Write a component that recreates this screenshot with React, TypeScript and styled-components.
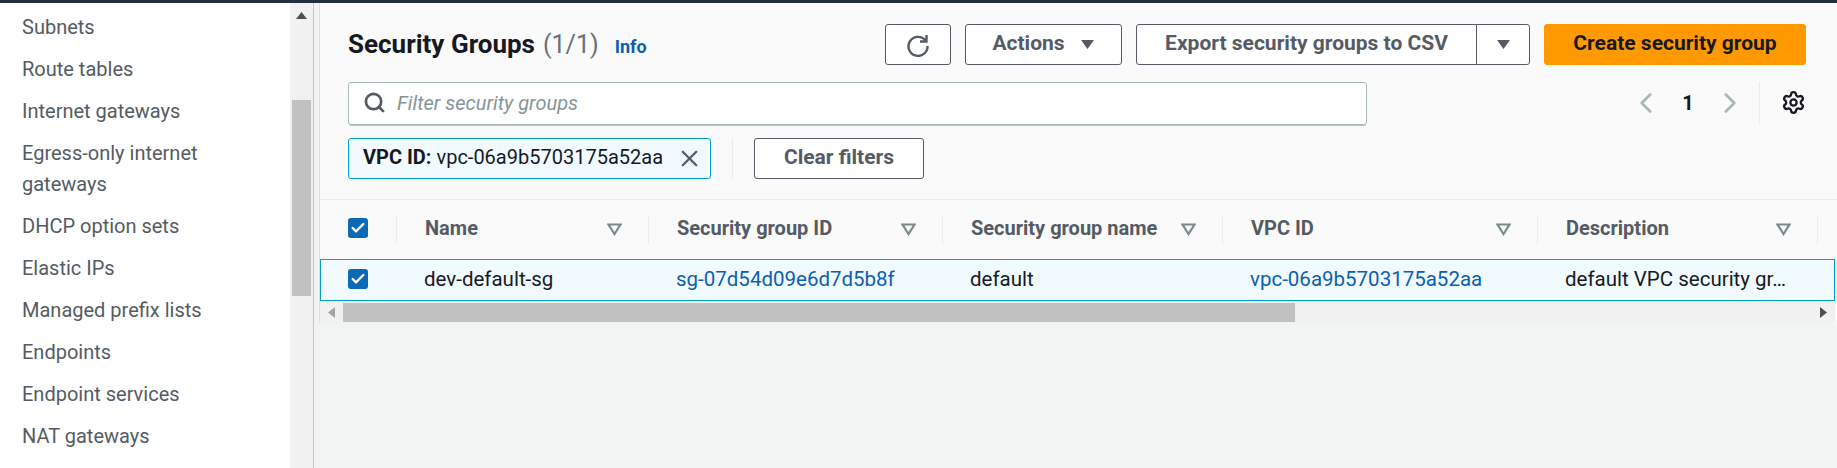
import styled, { createGlobalStyle } from "styled-components";
import { Check, ChevronLeft, ChevronRight, Search, Settings, X } from "lucide-react";

const GlobalStyle = createGlobalStyle`
  html, body {
    margin: 0;
    padding: 0;
    height: 100%;
    overflow: hidden;
    background: #f2f3f3;
    font-family: Roboto, "Liberation Sans", sans-serif;
  }
  * { box-sizing: border-box; }
`;

const Page = styled.div`
  width: 1837px;
  height: 468px;
  display: flex;
  flex-direction: column;
  overflow: hidden;
`;

const TopBar = styled.div`
  height: 3px;
  flex: none;
  background: #232f3e;
`;

const Main = styled.div`
  flex: 1;
  display: flex;
  min-height: 0;
`;

const Sidebar = styled.nav`
  width: 290px;
  flex: none;
  background: #fff;
  padding: 9px 0 0 22px;
  overflow: hidden;
`;

const NavItem = styled.div`
  width: 200px;
  margin-bottom: 11px;
  font-size: 20px;
  line-height: 31px;
  color: #545b64;
`;

const NavScroll = styled.div`
  width: 24px;
  flex: none;
  background: #f1f1f1;
  display: flex;
  flex-direction: column;
  align-items: center;
  border-right: 1px solid #c4c8c8;
`;

const ArrowBox = styled.div`
  height: 25px;
  flex: none;
  display: flex;
  align-items: center;
  justify-content: center;
`;

const NavThumb = styled.div`
  width: 19px;
  height: 196px;
  margin-top: 72px;
  background: #c1c1c1;
`;

const Gutter = styled.div`
  width: 5px;
  flex: none;
`;

const Content = styled.main`
  width: 1518px;
  flex: none;
`;

const Panel = styled.section`
  background: #fafafa;
  border-left: 1px solid #dfe2e2;
`;

const Header = styled.div`
  padding: 21px 31px 20px 28px;
  border-bottom: 1px solid #eaeded;
  display: flex;
  flex-direction: column;
`;

const TitleRow = styled.div`
  display: flex;
  align-items: center;
  gap: 14px;
  height: 41px;
`;

const TitleBlock = styled.div`
  flex: 1;
  display: flex;
  align-items: baseline;
  color: #16191f;
`;

const Title = styled.h1`
  margin: 0;
  font-size: 26px;
  font-weight: 700;
  line-height: 41px;
`;

const Count = styled.span`
  margin-left: 8px;
  font-size: 25px;
  color: #687078;
`;

const InfoLink = styled.a`
  margin-left: 16px;
  font-size: 18px;
  font-weight: 700;
  color: #0b5fad;
`;

const Button = styled.button<{ $w?: number }>`
  height: 41px;
  width: ${(p) => (p.$w ? `${p.$w}px` : "auto")};
  padding: 0;
  display: inline-flex;
  align-items: center;
  justify-content: center;
  gap: 15px;
  background: #fff;
  border: 1px solid #545b64;
  border-radius: 3px;
  color: #545b64;
  font-family: inherit;
  font-size: 21px;
  font-weight: 700;
`;

const ButtonLabel = styled.span`
  padding-bottom: 4px;
`;

const SplitButton = styled.div`
  width: 394px;
  height: 41px;
  display: flex;
  background: #fff;
  border: 1px solid #545b64;
  border-radius: 3px;
  color: #545b64;
  font-size: 21px;
  font-weight: 700;
`;

const SplitLabel = styled.div`
  flex: 1;
  display: flex;
  align-items: center;
  justify-content: center;
  border-right: 1px solid #545b64;
`;

const SplitCaret = styled.div`
  width: 52px;
  display: flex;
  align-items: center;
  justify-content: center;
`;

const PrimaryButton = styled(Button)`
  background: #ff9900;
  border-color: #ff9900;
  color: #16191f;
`;

const SearchRow = styled.div`
  margin-top: 17px;
  display: flex;
  align-items: flex-start;
`;

const SearchBox = styled.div`
  width: 1019px;
  height: 43px;
  display: flex;
  align-items: center;
  gap: 11px;
  padding: 0 0 2px 14px;
  background: #fff;
  border: 1px solid #aab7b8;
  border-radius: 3px;
  box-shadow: 0 2px 0 -1px #9fcfd6;
  font-size: 20px;
  font-style: italic;
  color: #879596;
`;

const Pager = styled.div`
  margin-left: auto;
  display: flex;
  align-items: center;
  height: 41px;
  color: #aab7b8;
`;

const PageNumber = styled.span`
  width: 50px;
  text-align: center;
  font-size: 20px;
  font-weight: 700;
  color: #16191f;
`;

const PagerDivider = styled.div`
  width: 1px;
  height: 41px;
  margin: 0 21px 0 12px;
  background: #eaeded;
`;

const FilterRow = styled.div`
  margin-top: 13px;
  display: flex;
  align-items: center;
`;

const Token = styled.div`
  width: 363px;
  height: 41px;
  display: flex;
  align-items: center;
  justify-content: space-between;
  padding: 0 7px 0 14px;
  background: #f1faff;
  border: 1px solid #00a1c9;
  border-radius: 3px;
  font-size: 20px;
  color: #16191f;
  white-space: nowrap;
  b { font-weight: 700; }
`;

const FilterDivider = styled.div`
  width: 1px;
  height: 41px;
  margin: 0 21px;
  background: #eaeded;
`;

const Grid = styled.div`
  display: grid;
  grid-template-columns: 77px 252px 294px 280px 315px 280px;
  align-items: center;
`;

const HeadRow = styled(Grid)`
  height: 59px;
  background: #fafafa;
`;

const HeadCell = styled.div<{ $first?: boolean }>`
  height: 29px;
  display: flex;
  align-items: center;
  justify-content: ${(p) => (p.$first ? "flex-start" : "space-between")};
  padding: ${(p) => (p.$first ? "0 0 0 28px" : "0 26px 0 28px")};
  border-right: 1px solid #eaeded;
  font-size: 20px;
  font-weight: 700;
  color: #545b64;
  white-space: nowrap;
`;

const BodyRow = styled(Grid)`
  height: 42px;
  margin-right: 2px;
  padding-bottom: 3px;
  background: #f1faff;
  border: 1px solid #00a1c9;
  font-size: 20.5px;
  color: #16191f;
`;

const BodyCell = styled.div<{ $link?: boolean }>`
  padding-left: 26px;
  display: flex;
  align-items: center;
  white-space: nowrap;
  overflow: hidden;
  color: ${(p) => (p.$link ? "#0b5fad" : "#16191f")};
`;

const FirstBodyCell = styled(BodyCell)`
  padding-left: 27px;
`;

const Box = styled.span`
  width: 20px;
  height: 20px;
  display: inline-flex;
  align-items: center;
  justify-content: center;
  background: #0a6ab5;
  border-radius: 3px;
  color: #fff;
`;

const HeadBox = styled(Box)`
  margin-bottom: 4px;
`;

const HScroll = styled.div`
  height: 22px;
  margin-right: 2px;
  padding-top: 2px;
  display: flex;
  align-items: flex-start;
  background: #f1f1f1;
`;

const HArrow = styled.div<{ $w: number }>`
  width: ${(p) => p.$w}px;
  height: 19px;
  flex: none;
  display: flex;
  align-items: center;
  justify-content: center;
`;

const HThumb = styled.div`
  width: 952px;
  height: 19px;
  background: #c1c1c1;
`;

const HTrack = styled.div`
  flex: 1;
`;

function Caret() {
  return (
    <svg width="15" height="11" viewBox="0 0 15 11">
      <path d="M1 1h13L7.5 10z" fill="#545b64" />
    </svg>
  );
}

function SortCaret() {
  return (
    <svg width="15" height="13" viewBox="0 0 15 13">
      <path d="M1.5 1.5h12L7.5 11z" fill="none" stroke="#7b8a8b" strokeWidth="2.2" />
    </svg>
  );
}

function RefreshIcon() {
  return (
    <svg width="24" height="24" viewBox="0 0 24 24" fill="none" stroke="#545b64" strokeWidth="2.4">
      <path d="M19.5 7.5A9.5 9.5 0 1 0 21.5 13" />
      <path d="M20.5 2v6.5H14" />
    </svg>
  );
}

const navItems = [
  "Subnets",
  "Route tables",
  "Internet gateways",
  "Egress-only internet gateways",
  "DHCP option sets",
  "Elastic IPs",
  "Managed prefix lists",
  "Endpoints",
  "Endpoint services",
  "NAT gateways",
];

const columns = ["Name", "Security group ID", "Security group name", "VPC ID", "Description"];

export default function App() {
  return (
    <Page>
      <GlobalStyle />
      <TopBar />
      <Main>
        <Sidebar>
          {navItems.map((item) => (
            <NavItem key={item}>{item}</NavItem>
          ))}
        </Sidebar>
        <NavScroll>
          <ArrowBox>
            <svg width="11" height="7" viewBox="0 0 11 7">
              <path d="M5.5 0L11 7H0z" fill="#505050" />
            </svg>
          </ArrowBox>
          <NavThumb />
        </NavScroll>
        <Gutter />
        <Content>
          <Panel>
            <Header>
              <TitleRow>
                <TitleBlock>
                  <Title>Security Groups</Title>
                  <Count>(1/1)</Count>
                  <InfoLink>Info</InfoLink>
                </TitleBlock>
                <Button $w={66}>
                  <RefreshIcon />
                </Button>
                <Button $w={157}>
                  <ButtonLabel>Actions</ButtonLabel> <Caret />
                </Button>
                <SplitButton>
                  <SplitLabel>
                    <ButtonLabel>Export security groups to CSV</ButtonLabel>
                  </SplitLabel>
                  <SplitCaret>
                    <Caret />
                  </SplitCaret>
                </SplitButton>
                <PrimaryButton $w={262}>
                  <ButtonLabel>Create security group</ButtonLabel>
                </PrimaryButton>
              </TitleRow>
              <SearchRow>
                <SearchBox>
                  <Search size={23} strokeWidth={2.8} color="#545b64" />
                  Filter security groups
                </SearchBox>
                <Pager>
                  <ChevronLeft size={34} strokeWidth={1.9} />
                  <PageNumber>1</PageNumber>
                  <ChevronRight size={34} strokeWidth={1.9} />
                  <PagerDivider />
                  <Settings size={25} strokeWidth={2.2} color="#16191f" />
                </Pager>
              </SearchRow>
              <FilterRow>
                <Token>
                  <ButtonLabel>
                    <b>VPC ID:</b> vpc-06a9b5703175a52aa
                  </ButtonLabel>
                  <X size={27} strokeWidth={2} color="#545b64" />
                </Token>
                <FilterDivider />
                <Button $w={170}>
                  <ButtonLabel>Clear filters</ButtonLabel>
                </Button>
              </FilterRow>
            </Header>
            <HeadRow>
              <HeadCell $first>
                <HeadBox>
                  <Check size={16} strokeWidth={3.5} />
                </HeadBox>
              </HeadCell>
              {columns.map((col) => (
                <HeadCell key={col}>
                  <ButtonLabel>{col}</ButtonLabel>
                  <SortCaret />
                </HeadCell>
              ))}
            </HeadRow>
            <BodyRow>
              <FirstBodyCell>
                <Box>
                  <Check size={16} strokeWidth={3.5} />
                </Box>
              </FirstBodyCell>
              <BodyCell>dev-default-sg</BodyCell>
              <BodyCell $link>sg-07d54d09e6d7d5b8f</BodyCell>
              <BodyCell>default</BodyCell>
              <BodyCell $link>vpc-06a9b5703175a52aa</BodyCell>
              <BodyCell>default VPC security gr…</BodyCell>
            </BodyRow>
            <HScroll>
              <HArrow $w={23}>
                <svg width="7" height="11" viewBox="0 0 7 11">
                  <path d="M0 5.5L7 0v11z" fill="#a3a3a3" />
                </svg>
              </HArrow>
              <HThumb />
              <HTrack />
              <HArrow $w={24}>
                <svg width="7" height="11" viewBox="0 0 7 11">
                  <path d="M7 5.5L0 0v11z" fill="#505050" />
                </svg>
              </HArrow>
            </HScroll>
          </Panel>
        </Content>
      </Main>
    </Page>
  );
}
